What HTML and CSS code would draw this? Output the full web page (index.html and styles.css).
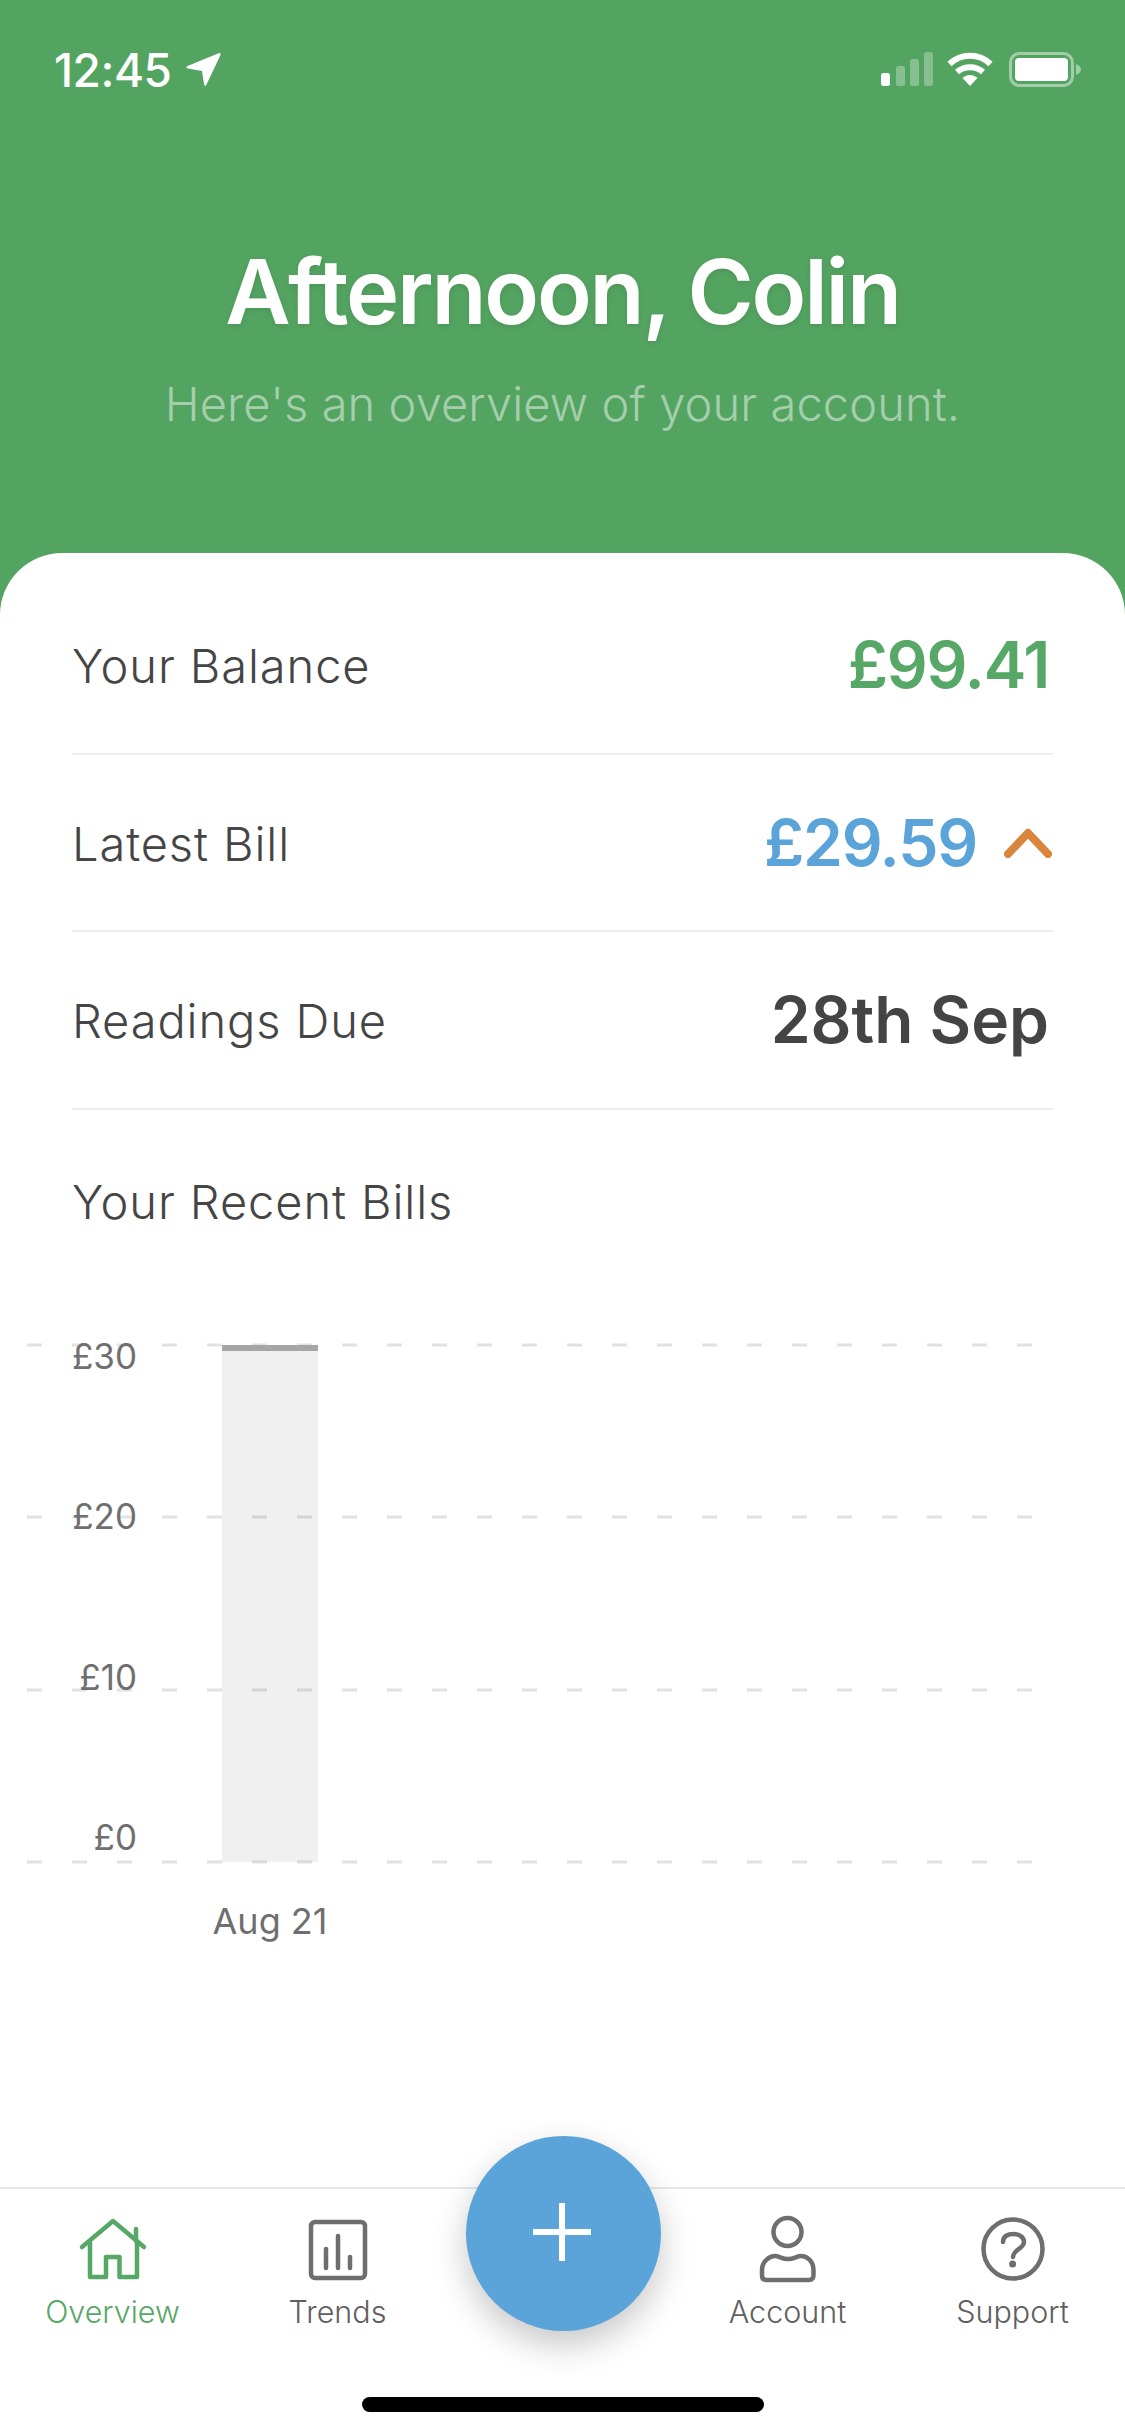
FILE: index.html
```html
<!DOCTYPE html>
<html lang="en">
<head>
<meta charset="utf-8">
<title>Overview</title>
<link rel="stylesheet" href="styles.css">
</head>
<body>
<div class="screen">
  <header class="hero">
    <div class="status">
      <div class="status-left">
        <span class="time">12:45</span>
        <svg class="arrow" width="36" height="36" viewBox="0 0 36 36"><path d="M33 1.500 Q36 0 35.500 3 L21.500 32.500 Q20 35.500 19 32 L17 19 L3 16.500 Q0 15.500 2.500 14 Z" fill="#fff"/></svg>
      </div>
      <div class="status-right">
        <svg class="signal" width="52" height="34" viewBox="0 0 52 34">
          <rect x="0" y="21" width="9" height="13" rx="2.500" fill="#fff"/>
          <rect x="15" y="14" width="9" height="20" rx="2.500" fill="#fff" opacity=".3"/>
          <rect x="29" y="7" width="9" height="27" rx="2.500" fill="#fff" opacity=".3"/>
          <rect x="43" y="0" width="9" height="34" rx="2.500" fill="#fff" opacity=".3"/>
        </svg>
        <svg class="wifi" width="46" height="34" viewBox="0 0 46 34">
          <path d="M2.500 12 C14 1 32 1 43.500 12" fill="none" stroke="#fff" stroke-width="6"/>
          <path d="M10 20 C17 13.500 29 13.500 36 20" fill="none" stroke="#fff" stroke-width="6"/>
          <path d="M15.500 26 L23 34 L30.500 26 C26 22 20 22 15.500 26 Z" fill="#fff"/>
        </svg>
        <svg class="battery" width="73" height="35" viewBox="0 0 73 35">
          <rect x="1.500" y="1.500" width="62" height="32" rx="9" fill="none" stroke="#fff" stroke-opacity=".45" stroke-width="3"/>
          <rect x="6" y="6" width="53" height="23" rx="4" fill="#fff"/>
          <path d="M67 12 C70 13 72 15 72 17.500 C72 20 70 22 67 23 Z" fill="#fff" opacity=".45"/>
        </svg>
      </div>
    </div>
    <h1 class="title">Afternoon, Colin</h1>
    <p class="subtitle">Here's an overview of your account.</p>
  </header>

  <main class="card">
    <div class="row">
      <span class="row-label">Your Balance</span>
      <span class="row-value value-green">£99.41</span>
    </div>
    <div class="row">
      <span class="row-label">Latest Bill</span>
      <span class="row-group">
        <span class="row-value value-blue">£29.59</span>
        <svg class="chevron" width="48" height="30" viewBox="0 0 48 30"><path d="M4 26 L24 5 L44 26" fill="none" stroke="#D9853C" stroke-width="8" stroke-linecap="round" stroke-linejoin="round"/></svg>
      </span>
    </div>
    <div class="row">
      <span class="row-label">Readings Due</span>
      <span class="row-value value-dark">28th Sep</span>
    </div>
    <h2 class="section-title">Your Recent Bills</h2>

    <svg class="chart" width="1125" height="640" viewBox="0 1320 1125 640">
      <g class="grid">
        <line x1="27" x2="1032" y1="1345" y2="1345"/>
        <line x1="27" x2="1032" y1="1517" y2="1517"/>
        <line x1="27" x2="1032" y1="1690" y2="1690"/>
        <line x1="27" x2="1032" y1="1862" y2="1862"/>
      </g>
      <rect class="bar" x="222" y="1345" width="96" height="517"/>
      <rect class="bar-cap" x="222" y="1345" width="96" height="6"/>
      <g class="axis-y">
        <text x="137" y="1369">£30</text>
        <text x="137" y="1529">£20</text>
        <text x="137" y="1690">£10</text>
        <text x="137" y="1850">£0</text>
      </g>
      <text class="axis-x" x="270" y="1934">Aug 21</text>
    </svg>
  </main>

  <nav class="tabbar">
    <div class="tab tab-active">
      <svg class="tab-icon" width="72" height="64" viewBox="0 0 72 64">
        <path d="M5 30 L36 4 L67 30 M13 24 V60 H29 V40 H42.500 V60 H60 V24 M59 12 V24"/>
      </svg>
      <span class="tab-label">Overview</span>
    </div>
    <div class="tab">
      <svg class="tab-icon" width="72" height="64" viewBox="0 0 72 64">
        <rect x="9" y="5" width="54" height="56" rx="4"/>
        <path d="M24 32 V51 M36 19 V51 M48 40 V51"/>
      </svg>
      <span class="tab-label">Trends</span>
    </div>
    <div class="tab tab-spacer"></div>
    <div class="tab">
      <svg class="tab-icon" width="66" height="72" viewBox="0 0 66 72">
        <circle cx="32.500" cy="19" r="14"/>
        <path d="M7 62 V57 C7 48 15 43 20 43 C24 43 27 46 33 46 C39 46 42 43 46 43 C52 43 58.500 48 58.500 57 V62 Q58.500 67 54 67 H11 Q7 67 7 62 Z"/>
      </svg>
      <span class="tab-label">Account</span>
    </div>
    <div class="tab">
      <svg class="tab-icon" width="70" height="70" viewBox="0 0 70 70">
        <circle cx="35" cy="35" r="29.500"/>
        <path d="M25 28 C25 22 30 20 35.500 20 C41 20 46 23 46 28 C46 35 36 34 35 43"/>
        <circle class="dot" cx="34.600" cy="50" r="3.500"/>
      </svg>
      <span class="tab-label">Support</span>
    </div>
    <button class="fab" aria-label="Add">
      <svg class="plus" width="62" height="62" viewBox="0 0 62 62"><path d="M31 2 V60 M2 31 H60" stroke="#fff" stroke-width="6" fill="none"/></svg>
    </button>
    <div class="home-indicator"></div>
  </nav>
</div>
</body>
</html>
```

FILE: styles.css
```css
* { box-sizing: border-box; margin: 0; padding: 0; }
html, body { width: 1125px; height: 2436px; overflow: hidden; background: #54A461; }
body { font-family: Inter, "Open Sans", sans-serif; }

.screen { width: 1125px; height: 2436px; display: flex; flex-direction: column; }

.hero { height: 553px; color: #fff; display: flex; flex-direction: column; align-items: center; flex: none; }
.status { width: 100%; height: 130px; padding: 49px 43px 0 54px; display: flex; justify-content: space-between; align-items: flex-start; }
.status-left { display: flex; align-items: center; gap: 13px; }
.time { font-size: 46px; line-height: 42px; font-weight: 500; letter-spacing: -.5px; }
.status-right { display: flex; align-items: flex-start; padding-top: 3px; }
.signal { margin-right: 14px; }
.wifi { margin-right: 16px; }
.title { margin-top: 102px; font-size: 90px; line-height: 120px; font-weight: 560; letter-spacing: -2.200px; white-space: nowrap; text-shadow: 0 2px 6px rgba(0,0,0,.1); }
.subtitle { margin-top: 22px; font-size: 47px; line-height: 60px; font-weight: 300; letter-spacing: .1px; color: #A5CFAC; white-space: nowrap; }

.card { flex: 1; background: #fff; border-radius: 62px 62px 0 0; padding-top: 24px; display: flex; flex-direction: column; }
.row { margin: 0 72px; height: 177.500px; flex: none; border-bottom: 2px solid #EEEEEE; display: flex; justify-content: space-between; align-items: center; padding-right: 4px; }
.row-label { font-size: 47px; font-weight: 300; letter-spacing: .9px; color: #454545; position: relative; top: 1px; }
.row-group { display: flex; align-items: center; gap: 27px; margin-right: -3px; }
.row-value { font-size: 64px; font-weight: 600; letter-spacing: -1.200px; }
.value-green { color: #57A866; }
.value-blue { color: #5AA4DA; }
.value-dark { color: #444444; letter-spacing: 0; }
.chevron { position: relative; top: 1px; }
.section-title { margin: 64px 0 0 72px; font-size: 47px; line-height: 56px; font-weight: 300; letter-spacing: .9px; color: #454545; }

.chart { display: block; flex: none; margin-top: 90px; }
.grid line { stroke: #E2E2E2; stroke-width: 3; stroke-dasharray: 15 30; }
.bar { fill: rgba(0,0,0,.06); }
.bar-cap { fill: #A6A6A6; }
.axis-y text { font-size: 35px; fill: #6F6F6F; text-anchor: end; }
.axis-x { font-size: 36px; fill: #6F6F6F; text-anchor: middle; }

.tabbar { position: relative; height: 249px; flex: none; background: #fff; border-top: 2px solid #E8E8E8; display: grid; grid-template-columns: repeat(5, 225px); align-items: start; }
.tab { display: flex; flex-direction: column; align-items: center; height: 145px; padding-top: 24px; position: relative; }
.tab-icon { display: block; fill: none; stroke: #6E6E70; stroke-width: 4.500; stroke-linejoin: round; stroke-linecap: round; height: 72px; }
.tab-icon .dot { fill: #6E6E70; stroke: none; }
.tab-label { font-size: 30.500px; line-height: 40px; font-weight: 300; color: #5F5F61; margin-top: 7px; }
.tab-active .tab-icon { stroke: #57A866; }
.tab-active .tab-label { color: #57A866; }

.fab { position: absolute; left: 466px; top: -53px; width: 195px; height: 195px; border: none; border-radius: 50%; background: #5AA4DA; box-shadow: 0 14px 34px rgba(0,0,0,.22); display: flex; align-items: center; justify-content: center; }
.plus { margin: 0 3px 3px 0; }
.home-indicator { position: absolute; left: 362px; top: 208px; width: 402px; height: 15px; border-radius: 8px; background: #000; }
```
